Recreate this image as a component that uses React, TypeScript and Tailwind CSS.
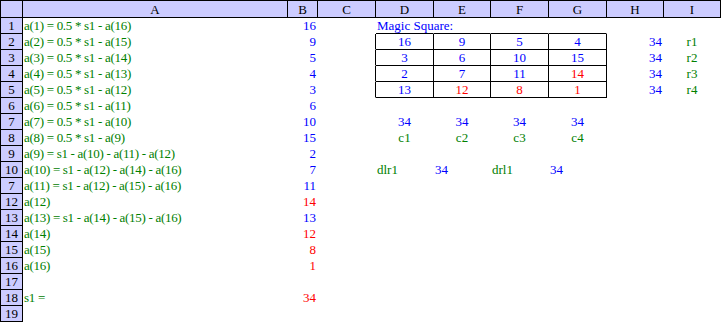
const colLetters = ["A", "B", "C", "D", "E", "F", "G", "H", "I"];
const rowLabels = [1, 2, 3, 4, 5, 6, 7, 8, 9, 10, 7, 12, 13, 14, 15, 16, 17, 18, 19];

type Tone = "g" | "b" | "r";
type Align = "l" | "c" | "r";
type Cell = { t: string; c: Tone; a: Align } | null;

const tone: Record<Tone, string> = {
  g: "text-[#008000]",
  b: "text-[#0000ff]",
  r: "text-[#ff0000]",
};

const align: Record<Align, string> = {
  l: "justify-start pl-[1px]",
  c: "justify-center",
  r: "justify-end pr-[1px]",
};

const formulas = [
  "a(1) = 0.5 * s1 - a(16)",
  "a(2) = 0.5 * s1 - a(15)",
  "a(3) = 0.5 * s1 - a(14)",
  "a(4) = 0.5 * s1 - a(13)",
  "a(5) = 0.5 * s1 - a(12)",
  "a(6) = 0.5 * s1 - a(11)",
  "a(7) = 0.5 * s1 - a(10)",
  "a(8) = 0.5 * s1 - a(9)",
  "a(9) = s1 - a(10) - a(11) - a(12)",
  "a(10) = s1 - a(12) - a(14) - a(16)",
  "a(11) = s1 - a(12) - a(15) - a(16)",
  "a(12)",
  "a(13) = s1 - a(14) - a(15) - a(16)",
  "a(14)",
  "a(15)",
  "a(16)",
];

const values: [string, Tone][] = [
  ["16", "b"], ["9", "b"], ["5", "b"], ["4", "b"],
  ["3", "b"], ["6", "b"], ["10", "b"], ["15", "b"],
  ["2", "b"], ["7", "b"], ["11", "b"], ["14", "r"],
  ["13", "b"], ["12", "r"], ["8", "r"], ["1", "r"],
];

const square: [string, Tone][][] = [
  [["16", "b"], ["9", "b"], ["5", "b"], ["4", "b"]],
  [["3", "b"], ["6", "b"], ["10", "b"], ["15", "b"]],
  [["2", "b"], ["7", "b"], ["11", "b"], ["14", "r"]],
  [["13", "b"], ["12", "r"], ["8", "r"], ["1", "r"]],
];

function buildRows(): Cell[][] {
  const rows: Cell[][] = Array.from({ length: 19 }, () => Array(9).fill(null));
  formulas.forEach((f, i) => {
    rows[i][0] = { t: f, c: "g", a: "l" };
    rows[i][1] = { t: values[i][0], c: values[i][1], a: "r" };
  });
  rows[0][3] = { t: "Magic Square:", c: "b", a: "l" };
  square.forEach((row, r) => {
    row.forEach(([t, c], k) => {
      rows[r + 1][3 + k] = { t, c, a: "c" };
    });
    rows[r + 1][7] = { t: "34", c: "b", a: "r" };
    rows[r + 1][8] = { t: `r${r + 1}`, c: "g", a: "c" };
  });
  for (let k = 0; k < 4; k++) {
    rows[6][3 + k] = { t: "34", c: "b", a: "c" };
    rows[7][3 + k] = { t: `c${k + 1}`, c: "g", a: "c" };
  }
  rows[9][3] = { t: "dlr1", c: "g", a: "l" };
  rows[9][4] = { t: "34", c: "b", a: "l" };
  rows[9][5] = { t: "drl1", c: "g", a: "l" };
  rows[9][6] = { t: "34", c: "b", a: "l" };
  rows[17][0] = { t: "s1 =", c: "g", a: "l" };
  rows[17][1] = { t: "34", c: "r", a: "r" };
  return rows;
}

// black cell edges for the magic square box
function edges(r: number, col: number) {
  const inBox = r >= 1 && r <= 4;
  const right = (inBox && col >= 2 && col <= 6) ? "border-r-black" : "border-r-transparent";
  const bottom =
    (r >= 0 && r <= 4 && col >= 3 && col <= 6) ? "border-b-black" : "border-b-transparent";
  return `${right} ${bottom}`;
}

export default function App() {
  const rows = buildRows();

  return (
    <div className="w-[721px] h-[323px] bg-white [font-family:'Liberation_Serif',serif] text-[13px] overflow-hidden">
      <div className="grid grid-cols-[23px_265px_30px_58px_58px_57px_58px_58px_57px_57px] grid-rows-[18px_repeat(19,16px)]">
        <div className="border border-black bg-[#ccccff]" />
        {colLetters.map((l) => (
          <div
            key={l}
            className="flex items-end justify-center border-t border-r border-b border-black bg-[#ccccff] text-black leading-[15px]"
          >
            {l}
          </div>
        ))}
        {rows.map((row, r) => (
          <div key={r} className="contents">
            <div className="flex items-end justify-center border-l border-r border-b border-black bg-[#ccccff] text-black leading-[15px]">
              {rowLabels[r]}
            </div>
            {row.map((cell, col) => (
              <div
                key={col}
                className={`flex items-end whitespace-nowrap overflow-visible border-r border-b leading-[15px] ${edges(r, col)} ${
                  col === 0 ? "tracking-[-0.3px]" : ""
                } ${cell ? `${tone[cell.c]} ${align[cell.a]}` : ""}`}
              >
                {cell?.t}
              </div>
            ))}
          </div>
        ))}
      </div>
    </div>
  );
}
